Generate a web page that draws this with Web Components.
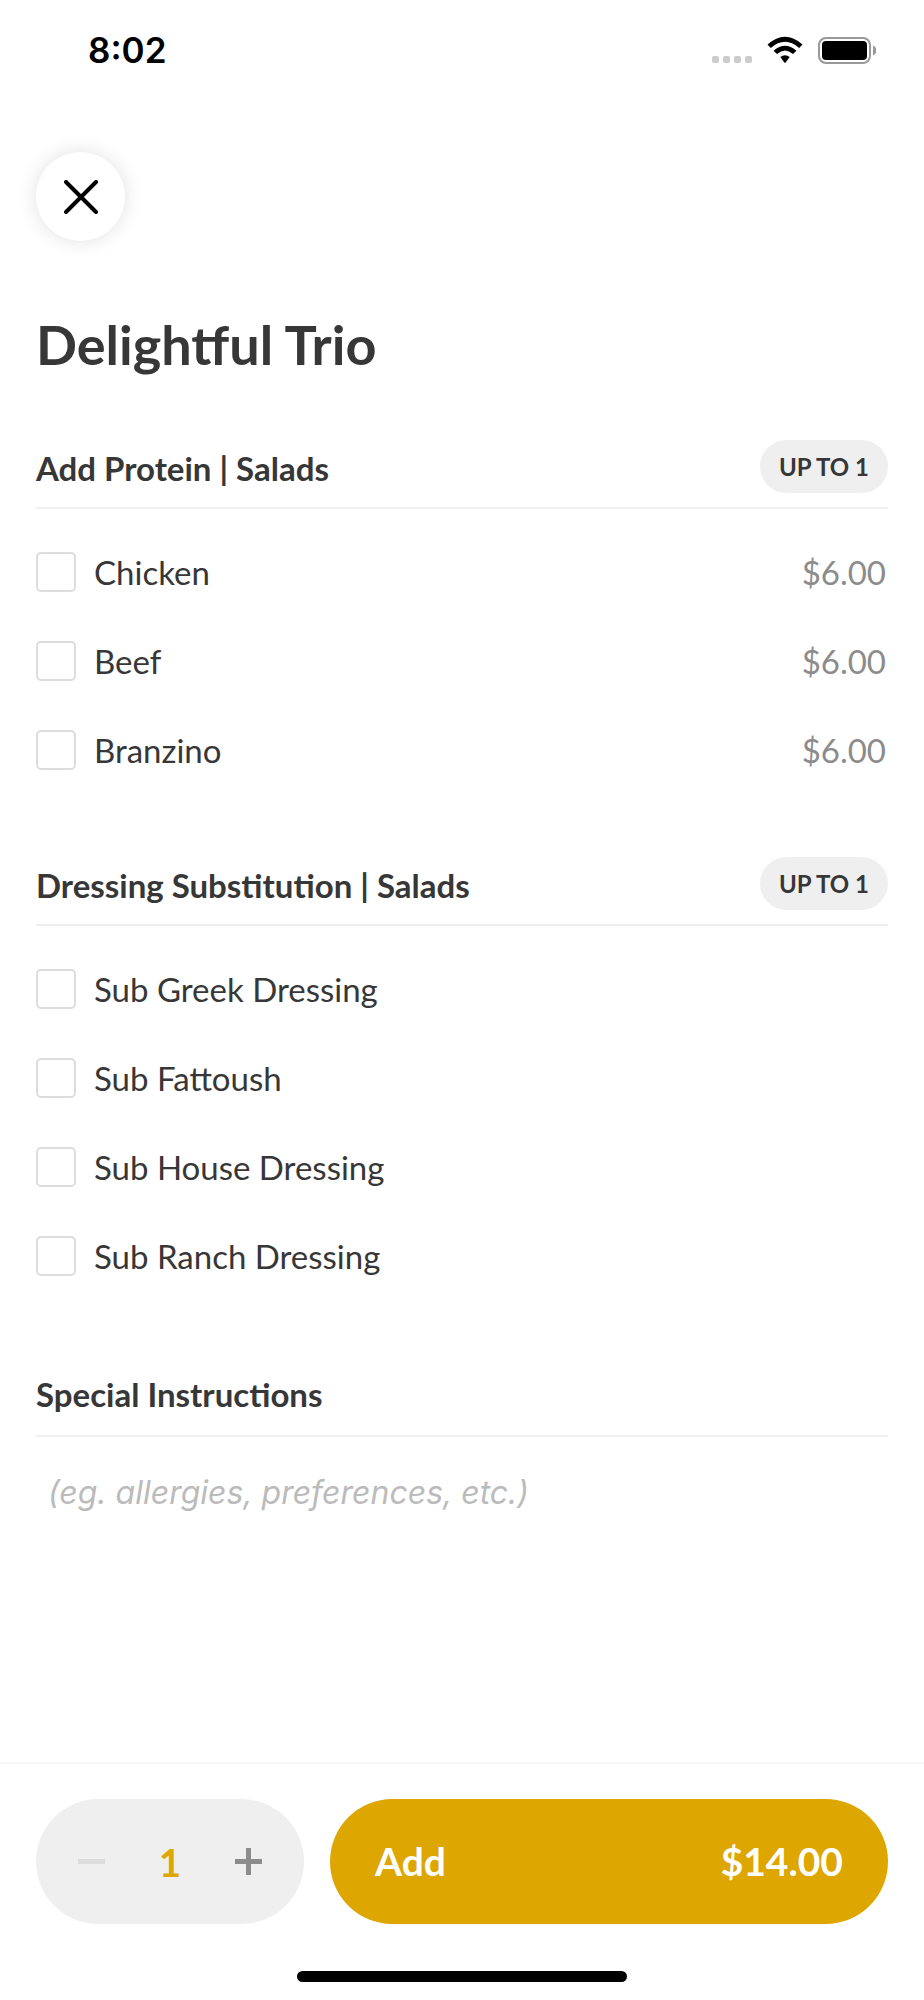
<!DOCTYPE html>
<html lang="en">
<head>
<meta charset="utf-8">
<meta name="viewport" content="width=device-width, initial-scale=1">
<title>Delightful Trio</title>
<style>
  html, body { margin: 0; }
  body { background: #fff; color: #373737; font-family: Lato, "Open Sans", sans-serif; }
</style>
</head>
<body>
<order-screen></order-screen>
<script>
  const define = (name, html, setup) => {
    const template = document.createElement('template');
    template.innerHTML = html;
    customElements.define(name, class extends HTMLElement {
      connectedCallback() {
        if (this.shadowRoot) return;
        const root = this.attachShadow({ mode: 'open' });
        root.append(template.content.cloneNode(true));
        if (setup) setup(this, root);
      }
    });
  };

  define('status-bar', `
    <style>
      :host { display: flex; align-items: center; justify-content: space-between; height: 100px; padding: 0 48px 0 88px; box-sizing: border-box; color: #000; }
      time { font: 600 35px/40px Inter, sans-serif; }
      .icons { display: flex; align-items: center; }
      svg { display: block; }
    </style>
    <time>8:02</time>
    <div class="icons">
      <svg width="166" height="40" viewBox="0 0 166 40" role="img" aria-label="Wi-Fi connected, battery full">
        <g fill="#ccc"><rect x="2" y="26" width="7" height="7" rx="2"/><rect x="13" y="26" width="7" height="7" rx="2"/><rect x="24" y="26" width="7" height="7" rx="2"/><rect x="35" y="26" width="7" height="7" rx="2"/></g>
        <path d="M57.5 14.5 L60.8 17.9 Q75 5.5 89.200 17.900 L92.500 14.500 Q75 -1.100 57.500 14.500Z"/>
        <path d="M63.600 20.700 L67 24 Q75 17 83 24 L86.400 20.700 Q75 10.600 63.600 20.700Z"/>
        <path d="M70.300 27.100 Q75 23.400 79.700 27.100 L75.600 32.600 Q75 33.300 74.400 32.600Z"/>
        <rect x="109" y="8" width="51" height="25" rx="7" fill="none" stroke="#999" stroke-width="2"/>
        <rect x="112" y="11" width="45" height="19" rx="4"/>
        <path d="M163 15.500 Q166.500 17 166.500 20.500 Q166.500 24 163 25.500Z" fill="#999"/>
      </svg>
    </div>`);

  define('close-button', `
    <style>
      :host { display: block; }
      button { display: grid; place-items: center; width: 89px; height: 89px; padding: 0; border: 0; border-radius: 50%; background: #fff; box-shadow: 0 0 20px rgba(0,0,0,.12); cursor: pointer; }
    </style>
    <button type="button" aria-label="Close">
      <svg width="34" height="34" viewBox="0 0 34 34" fill="none" stroke="#000" stroke-width="4" stroke-linecap="round"><path d="M2 2 32 32M32 2 2 32"/></svg>
    </button>`);

  define('section-header', `
    <style>
      :host { display: flex; align-items: flex-end; justify-content: space-between; min-height: 53px; padding-bottom: 14px; border-bottom: 2px solid #efefef; }
      :host([plain]) { min-height: 56px; padding-bottom: 16px; }
      h2 { margin: 0; font-size: 33px; line-height: 50px; font-weight: 700; }
      .badge { padding: 0 19px; border-radius: 27px; background: #efefef; font-size: 24px; line-height: 53px; font-weight: 700; }
    </style>
    <h2><slot></slot></h2>`, (host, root) => {
      if (!host.hasAttribute('badge')) return;
      const badge = document.createElement('span');
      badge.className = 'badge';
      badge.textContent = host.getAttribute('badge');
      root.append(badge);
    });

  define('option-row', `
    <style>
      :host { display: block; }
      label { display: flex; align-items: center; gap: 18px; height: 89px; font-size: 33px; line-height: 40px; cursor: pointer; }
      input { appearance: none; flex: none; width: 40px; height: 40px; margin: 0; border: 2px solid #ddd; border-radius: 5px; background: #fff; }
      input:checked { border-color: #dea600; background: #dea600; }
      .name { flex: 1; }
      .price { padding-right: 2px; color: #8c8c8c; }
    </style>
    <label><input type="checkbox"><span class="name"><slot></slot></span></label>`, (host, root) => {
      if (!host.hasAttribute('price')) return;
      const price = document.createElement('span');
      price.className = 'price';
      price.textContent = host.getAttribute('price');
      root.querySelector('label').append(price);
    });

  define('option-group', `
    <style>
      :host { display: block; }
      .rows { padding-top: 18px; }
    </style>
    <slot name="header"></slot>
    <div class="rows"><slot></slot></div>`);

  define('special-instructions', `
    <style>
      :host { display: block; }
      textarea { display: block; box-sizing: border-box; width: 100%; height: 144px; margin-top: 32px; padding: 0 12px; border: 0; outline: 0; resize: none; background: none; color: #373737; font: italic 400 32px/48px Inter, sans-serif; }
      textarea::placeholder { color: #bbb; opacity: 1; }
    </style>
    <section-header plain>Special Instructions</section-header>
    <textarea aria-label="Special Instructions" placeholder="(eg. allergies, preferences, etc.)"></textarea>`);

  define('quantity-stepper', `
    <style>
      :host { display: flex; align-items: center; justify-content: space-between; flex: none; width: 268px; height: 125px; padding: 0 42px; box-sizing: border-box; border-radius: 63px; background: #efefef; }
      button { padding: 0; border: 0; background: none; color: #8c8c8c; cursor: pointer; }
      button:disabled { color: #ddd; cursor: default; }
      svg { display: block; }
      output { color: #dea600; font-size: 38px; line-height: 48px; font-weight: 700; }
    </style>
    <button type="button" aria-label="Decrease quantity" disabled><svg width="27" height="27" viewBox="0 0 27 27" fill="currentColor"><rect y="11" width="27" height="5"/></svg></button>
    <output>1</output>
    <button type="button" aria-label="Increase quantity"><svg width="27" height="27" viewBox="0 0 27 27" fill="currentColor"><path d="M11 0h5v11h11v5H16v11h-5V16H0v-5h11z"/></svg></button>`,
    (host, root) => {
      const [less, more] = root.querySelectorAll('button');
      const output = root.querySelector('output');
      const step = by => {
        output.value = Number(output.value) + by;
        less.disabled = Number(output.value) <= 1;
      };
      less.addEventListener('click', () => step(-1));
      more.addEventListener('click', () => step(1));
    });

  define('add-button', `
    <style>
      :host { display: block; flex: 1; }
      button { display: flex; align-items: center; justify-content: space-between; width: 100%; height: 125px; padding: 0 45px 2px; border: 0; border-radius: 63px; background: #dea600; color: #fff; font: 700 39px/48px Lato, sans-serif; cursor: pointer; }
    </style>
    <button type="button"><span><slot></slot></span><span><slot name="price"></slot></span></button>`);

  define('order-footer', `
    <style>
      :host { display: block; border-top: 2px solid #f8f8f8; padding: 35px 36px 18px; }
      .actions { display: flex; gap: 26px; }
      .home { width: 330px; height: 11px; margin: 47px auto 0; border-radius: 6px; background: #000; }
    </style>
    <div class="actions">
      <quantity-stepper></quantity-stepper>
      <add-button>Add<span slot="price">$14.00</span></add-button>
    </div>
    <div class="home"></div>`);

  define('order-screen', `
    <style>
      :host { display: flex; flex-direction: column; min-height: 100vh; }
      main { flex: 1; padding: 52px 36px 0; }
      h1 { margin: 72px 0 63px; font-size: 54px; line-height: 64px; font-weight: 700; }
      .groups { display: flex; flex-direction: column; gap: 63px; }
    </style>
    <status-bar></status-bar>
    <main>
      <close-button></close-button>
      <h1>Delightful Trio</h1>
      <div class="groups">
        <option-group>
          <section-header slot="header" badge="UP TO 1">Add Protein | Salads</section-header>
          <option-row price="$6.00">Chicken</option-row>
          <option-row price="$6.00">Beef</option-row>
          <option-row price="$6.00">Branzino</option-row>
        </option-group>
        <option-group>
          <section-header slot="header" badge="UP TO 1">Dressing Substitution | Salads</section-header>
          <option-row>Sub Greek Dressing</option-row>
          <option-row>Sub Fattoush</option-row>
          <option-row>Sub House Dressing</option-row>
          <option-row>Sub Ranch Dressing</option-row>
        </option-group>
        <special-instructions></special-instructions>
      </div>
    </main>
    <order-footer></order-footer>`);
</script>
</body>
</html>
